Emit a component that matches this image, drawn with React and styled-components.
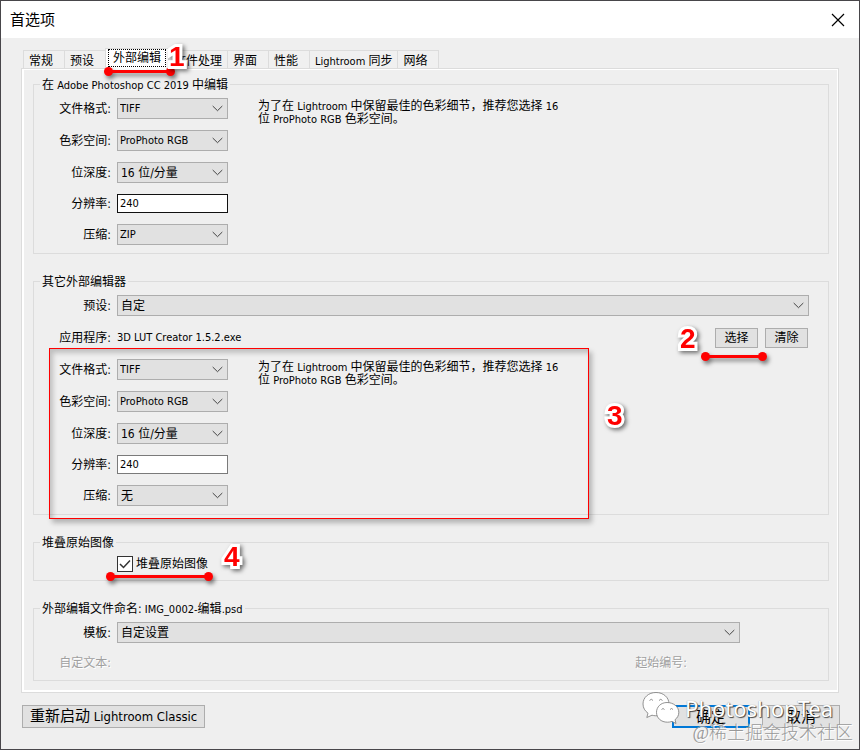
import React, { useId, useState } from "react"
import styled, { createGlobalStyle, css } from "styled-components"

const formats = ["TIFF", "PSD", "JPEG"]
const spaces = ["ProPhoto RGB", "Adobe RGB", "sRGB"]
const depths = ["16 位/分量", "8 位/分量"]
const compressions = ["ZIP", "LZW", "无"]

const tabs = [
    { id: "general", label: "常规" },
    { id: "presets", label: "预设" },
    { id: "external", label: "外部编辑" },
    { id: "files", label: "文件处理" },
    { id: "interface", label: "界面" },
    { id: "performance", label: "性能" },
    { id: "sync", latin: "Lightroom ", label: "同步" },
    { id: "network", label: "网络" },
]

function Dropdown({ id, options, value, latin }) {
    return (
        <SelectWrapper>
            <Select id={id} defaultValue={value} $latin={latin}>
                {options.map((option) => (
                    <option key={option}>{option}</option>
                ))}
            </Select>
            <Chevron viewBox="0 0 11 7" aria-hidden="true">
                <path d="M0.7 1 L5.5 5.7 L10.3 1" />
            </Chevron>
        </SelectWrapper>
    )
}

function ExportFields({ compression, focused, children }) {
    const id = useId()
    return (
        <FieldsArea>
            <Fields>
                <Row>
                    <Label htmlFor={id + "format"}>文件格式:</Label>
                    <Dropdown id={id + "format"} options={formats} value="TIFF" latin />
                </Row>
                <Row>
                    <Label htmlFor={id + "space"}>色彩空间:</Label>
                    <Dropdown id={id + "space"} options={spaces} value="ProPhoto RGB" latin />
                </Row>
                <Row>
                    <Label htmlFor={id + "depth"}>位深度:</Label>
                    <Dropdown id={id + "depth"} options={depths} value="16 位/分量" />
                </Row>
                <Row>
                    <Label htmlFor={id + "dpi"}>分辨率:</Label>
                    <Input id={id + "dpi"} defaultValue="240" $focused={focused} />
                </Row>
                <Row>
                    <Label htmlFor={id + "zip"}>压缩:</Label>
                    <Dropdown id={id + "zip"} options={compressions} value={compression} latin={compression === "ZIP"} />
                </Row>
            </Fields>
            <Note>
                为了在<Latin> Lightroom </Latin>中保留最佳的色彩细节，推荐您选择<Latin> 16 </Latin>位<Latin> ProPhoto RGB </Latin>色彩空间。
            </Note>
            {children}
        </FieldsArea>
    )
}

function App() {
    const [active, setActive] = useState("external")
    return (
        <Window>
            <GlobalStyle />
            <TitleBar>
                <Title>首选项</Title>
                <CloseButton aria-label="关闭">
                    <svg width="14" height="14" viewBox="0 0 14 14">
                        <path d="M1 1 L13 13 M13 1 L1 13" stroke="#000" strokeWidth="1.2" />
                    </svg>
                </CloseButton>
            </TitleBar>
            <Content>
                <TabList role="tablist">
                    {tabs.map((tab) => (
                        <TabSlot key={tab.id}>
                            <Tab
                                role="tab"
                                aria-selected={tab.id === active}
                                $active={tab.id === active}
                                onClick={() => setActive(tab.id)}
                            >
                                <TabText $active={tab.id === active}>
                                    {tab.latin && <Latin>{tab.latin}</Latin>}
                                    {tab.label}
                                </TabText>
                            </Tab>
                            {tab.id === "external" && (
                                <>
                                    <TabMark />
                                    <TabNumber>1</TabNumber>
                                </>
                            )}
                        </TabSlot>
                    ))}
                </TabList>
                <Panel role="tabpanel">
                    <Group>
                        <Legend>在<Latin> Adobe Photoshop CC 2019 </Latin>中编辑</Legend>
                        <ExportFields compression="ZIP" focused />
                    </Group>

                    <Group>
                        <Legend>其它外部编辑器</Legend>
                        <Fields>
                            <WideRow>
                                <Label htmlFor="preset">预设:</Label>
                                <Dropdown id="preset" options={["自定"]} value="自定" />
                            </WideRow>
                            <WideRow>
                                <Label as="span">应用程序:</Label>
                                <AppName>3D LUT Creator 1.5.2.exe</AppName>
                                <Actions>
                                    <SmallButton>选择</SmallButton>
                                    <SmallButton>清除</SmallButton>
                                    <ActionMark />
                                    <ActionNumber>2</ActionNumber>
                                </Actions>
                            </WideRow>
                            <ExportFields compression="无">
                                <Frame />
                                <FrameNumber>3</FrameNumber>
                            </ExportFields>
                        </Fields>
                    </Group>

                    <Group>
                        <Legend>堆叠原始图像</Legend>
                        <CheckRow>
                            <CheckLabel>
                                <Checkbox type="checkbox" defaultChecked />
                                <Tick viewBox="0 0 16 16" aria-hidden="true">
                                    <path d="M3 8 L6.5 11.5 L13 4.5" />
                                </Tick>
                                堆叠原始图像
                            </CheckLabel>
                            <CheckMark />
                            <CheckNumber>4</CheckNumber>
                        </CheckRow>
                    </Group>

                    <Group>
                        <Legend>外部编辑文件命名:<Latin> IMG_0002-</Latin>编辑<Latin>.psd</Latin></Legend>
                        <Fields>
                            <TemplateRow>
                                <Label htmlFor="template">模板:</Label>
                                <Dropdown id="template" options={["自定设置"]} value="自定设置" />
                            </TemplateRow>
                            <DisabledRow>
                                <Label as="span">自定文本:</Label>
                                <span>起始编号:</span>
                            </DisabledRow>
                        </Fields>
                    </Group>
                </Panel>
                <Footer>
                    <RestartButton>重新启动<LargeLatin> Lightroom Classic</LargeLatin></RestartButton>
                    <DialogButtons>
                        <DialogButton $primary>确定</DialogButton>
                        <DialogButton>取消</DialogButton>
                    </DialogButtons>
                    <Brand>
                        <WechatLogo viewBox="0 0 38 34" aria-hidden="true">
                            <path d="M14 1.5 C6.5 1.5 1 6.5 1 13 C1 17 3 20 6 22.2 L4.8 26.5 L10 24.2 C12 24.8 15 25 18 24.5 C24 23 27 18.5 27 13 C27 6.5 21.5 1.5 14 1.5 Z" />
                            <path d="M25 11.5 C18.8 11.5 14.5 16 14.5 21.3 C14.5 27 19 31.2 25.5 31.2 C27 31.2 28.5 31 30 30.4 L34 32.5 L33 28.7 C35.5 26.8 36.8 24.3 36.8 21.3 C36.8 15.8 31.5 11.5 25 11.5 Z" />
                            <path d="M7.5 9.5 Q9.3 7 11 9.5 M17 9.5 Q18.8 7 20.5 9.5 M19.5 18.5 Q21 16.5 22.5 18.5 M28 18.5 Q29.5 16.5 31 18.5" />
                        </WechatLogo>
                        <BrandName>PhotoshopTea</BrandName>
                    </Brand>
                    <Community>@稀土掘金技术社区</Community>
                </Footer>
            </Content>
        </Window>
    )
}

export default App

const uiFont = `"DejaVu Sans Condensed", "Noto Sans CJK SC", sans-serif`

const GlobalStyle = createGlobalStyle`
  * {
    box-sizing: border-box;
  }
  body {
    margin: 0;
    background: #efefef;
  }
  button, input, select {
    font: inherit;
    color: inherit;
    margin: 0;
    border-radius: 0;
  }
`

const Window = styled.div`
  display: flex;
  flex-direction: column;
  min-height: 100vh;
  overflow: hidden;
  border: 1px solid #48464a;
  background: #efefef;
  color: #000;
  font-family: ${uiFont};
  font-size: 12px;
  line-height: 14px;
`

const TitleBar = styled.header`
  display: flex;
  align-items: center;
  justify-content: space-between;
  height: 37px;
  padding: 0 14px 0 9px;
  background: #fff;
`

const Title = styled.h1`
  margin: 0;
  font-size: 15px;
  font-weight: 400;
  line-height: 20px;
`

const CloseButton = styled.button`
  display: flex;
  padding: 0;
  border: 0;
  background: none;
`

const Content = styled.main`
  padding: 10px 20px 20px;
`

const Latin = styled.span`
  font-size: 11px;
`

const LargeLatin = styled.span`
  font-size: 13px;
`

const TabList = styled.div`
  display: flex;
  align-items: flex-end;
  height: 20px;
  padding-left: 2px;
`

const TabSlot = styled.div`
  position: relative;
`

const Tab = styled.button`
  position: relative;
  display: block;
  height: 18px;
  min-width: 42px;
  padding: 1px 4px 0;
  border: 1px solid #dcdcdc;
  border-bottom: 0;
  margin-right: -1px;
  background: #f0f0f0;
  line-height: 18px;
  text-align: left;
  white-space: nowrap;

  ${(props) => props.$active && css`
    z-index: 1;
    height: 21px;
    padding: 0 2px 2px;
    margin: 0 -1px -1px 0;
    background: #fff;
    line-height: 16px;
  `}
`

const TabText = styled.span`
  display: block;
  padding: 0 1px;
  ${(props) => props.$active && css`
    padding: 0 4px;
    border: 1px dotted #000;
  `}
`

const Panel = styled.section`
  display: grid;
  gap: 20px;
  padding: 8px 9px 11px 11px;
  border: 1px solid #dcdcdc;
  box-shadow: inset 2px 0 #fff, inset 0 1px #fff, inset -1px -2px #fff;
`

const Group = styled.fieldset`
  min-width: 0;
  margin: 0;
  padding: 7px 0 8px;
  border: 1px solid #dcdcdc;
`

const Legend = styled.legend`
  height: 14px;
  margin-left: 6px;
  padding: 0 2px;
  line-height: 16px;
  white-space: nowrap;
`

const FieldsArea = styled.div`
  position: relative;
  display: flex;
  gap: 30px;
`

const Fields = styled.div`
  display: grid;
  gap: 11px;
`

const Row = styled.div`
  display: grid;
  grid-template-columns: 77px 111px;
  column-gap: 6px;
  align-items: center;
`

const WideRow = styled(Row)`
  grid-template-columns: 77px 1fr auto;
  min-height: 21px;
  padding-right: 19px;
`

const TemplateRow = styled(Row)`
  grid-template-columns: 77px 1fr;
  padding-right: 88px;
`

const DisabledRow = styled.div`
  display: flex;
  align-items: center;
  justify-content: space-between;
  height: 18px;
  padding-right: 141px;
  color: #a0a0a0;
  text-shadow: 1px 1px #fff;

  > :first-child {
    width: 77px;
  }
`

const Label = styled.label`
  text-align: right;
  white-space: nowrap;
`

const SelectWrapper = styled.div`
  position: relative;
  ${WideRow} & {
    grid-column: 2 / -1;
  }
`

const Select = styled.select`
  display: block;
  appearance: none;
  width: 100%;
  height: 21px;
  padding: 0 22px 0 ${(props) => (props.$latin ? 2 : 3)}px;
  border: 1px solid #adadad;
  outline: 0;
  background: #e1e1e1;
  font-size: ${(props) => (props.$latin ? 11 : 12)}px;
`

const Chevron = styled.svg`
  position: absolute;
  top: 7px;
  right: 5px;
  width: 11px;
  height: 7px;
  fill: none;
  stroke: #444;
  pointer-events: none;
`

const Input = styled.input`
  width: 100%;
  height: 19px;
  padding: 0 2px;
  border: 1px solid ${(props) => (props.$focused ? "#111" : "#7a7a7a")};
  outline: 0;
  background: #fff;
  font-size: 11px;
`

const Note = styled.p`
  width: 302px;
  margin: 0;
  padding-top: 2px;
  line-height: 13px;
`

const AppName = styled.span`
  font-size: 11px;
`

const Actions = styled.div`
  position: relative;
  display: flex;
  gap: 7px;
  padding-right: 1px;
`

const SmallButton = styled.button`
  width: 43px;
  height: 20px;
  padding: 0;
  border: 1px solid #adadad;
  background: #e1e1e1;
`

const CheckRow = styled.div`
  position: relative;
  display: flex;
  padding-left: 83px;
`

const CheckLabel = styled.label`
  position: relative;
  display: flex;
  align-items: center;
  gap: 3px;
  height: 16px;
`

const Checkbox = styled.input`
  appearance: none;
  width: 16px;
  height: 16px;
  border: 1px solid #333;
  background: #fff;
`

const Tick = styled.svg`
  position: absolute;
  left: 0;
  top: 0;
  width: 16px;
  height: 16px;
  fill: none;
  stroke: #333;
  stroke-width: 1.5;
  visibility: hidden;

  ${Checkbox}:checked + & {
    visibility: visible;
  }
`

const Footer = styled.footer`
  position: relative;
  display: flex;
  justify-content: space-between;
  margin: 12px -1px 0 1px;
`

const RestartButton = styled.button`
  height: 23px;
  padding: 0 7px;
  border: 1px solid #adadad;
  background: #e1e1e1;
  font-size: 15px;
  line-height: 20px;
  white-space: nowrap;
`

const DialogButtons = styled.div`
  display: flex;
  gap: 12px;
`

const DialogButton = styled.button`
  width: 78px;
  height: 23px;
  padding: 0;
  border: ${(props) => (props.$primary ? "2px solid #0078d7" : "1px solid #adadad")};
  background: #e1e1e1;
  font-size: 15px;
  line-height: 18px;
`

/* watermark */
const Brand = styled.div`
  position: absolute;
  right: 7px;
  top: -14px;
  display: flex;
  align-items: center;
  gap: 5px;
  pointer-events: none;
`

const WechatLogo = styled.svg`
  width: 38px;
  height: 34px;
  fill: #fff;
  stroke: #777;
  stroke-width: 0.8;
`

const BrandName = styled.span`
  color: #fff;
  font-family: "Noto Sans", sans-serif;
  font-size: 22px;
  line-height: 34px;
  text-shadow: 1px 1px 1px #444, 0 0 1px #888;
`

const Community = styled.span`
  position: absolute;
  right: -13px;
  top: 16px;
  color: #999;
  font-family: "Liberation Serif", "Noto Sans CJK SC", sans-serif;
  font-size: 18px;
  font-weight: 300;
  line-height: 24px;
  white-space: nowrap;
  text-shadow: 1px 1px #fff;
  pointer-events: none;
`

/* red callouts laid over the dialog */
const Underline = styled.span`
  position: absolute;
  z-index: 2;
  height: 3px;
  background: #f00;
  filter: drop-shadow(2px 3px 2px rgba(0, 0, 0, 0.5));
  pointer-events: none;

  &::before, &::after {
    content: "";
    position: absolute;
    top: -3px;
    width: 9px;
    height: 9px;
    border-radius: 50%;
    background: #f00;
  }
  &::before { left: -4px; }
  &::after { right: -4px; }
`

const Number = styled.span`
  position: absolute;
  z-index: 3;
  color: #f00;
  font-family: "Liberation Sans", Arial, sans-serif;
  font-size: 28px;
  font-weight: 700;
  line-height: 28px;
  -webkit-text-stroke: 6px #fff;
  paint-order: stroke fill;
  stroke-linejoin: round;
  filter: drop-shadow(2px 2px 2px rgba(0, 0, 0, 0.55));
  pointer-events: none;
`

const TabMark = styled(Underline)`
  left: 3px;
  right: -3px;
  bottom: -5px;
`

const TabNumber = styled(Number)`
  left: 64px;
  top: -5px;
`

const ActionMark = styled(Underline)`
  left: -10px;
  top: 27px;
  width: 58px;
`

const ActionNumber = styled(Number)`
  left: -35px;
  top: -3px;
`

const Frame = styled.span`
  position: absolute;
  left: 15px;
  top: -11px;
  bottom: -13px;
  width: 540px;
  border: 1px solid #f00;
  box-shadow: 3px 4px 5px rgba(0, 0, 0, 0.25), inset 3px 4px 5px rgba(0, 0, 0, 0.2);
  pointer-events: none;
`

const FrameNumber = styled(Number)`
  left: 573px;
  top: 43px;
`

const CheckMark = styled(Underline)`
  left: 76px;
  top: 19px;
  width: 99px;
`

const CheckNumber = styled(Number)`
  left: 190px;
  top: -13px;
`
